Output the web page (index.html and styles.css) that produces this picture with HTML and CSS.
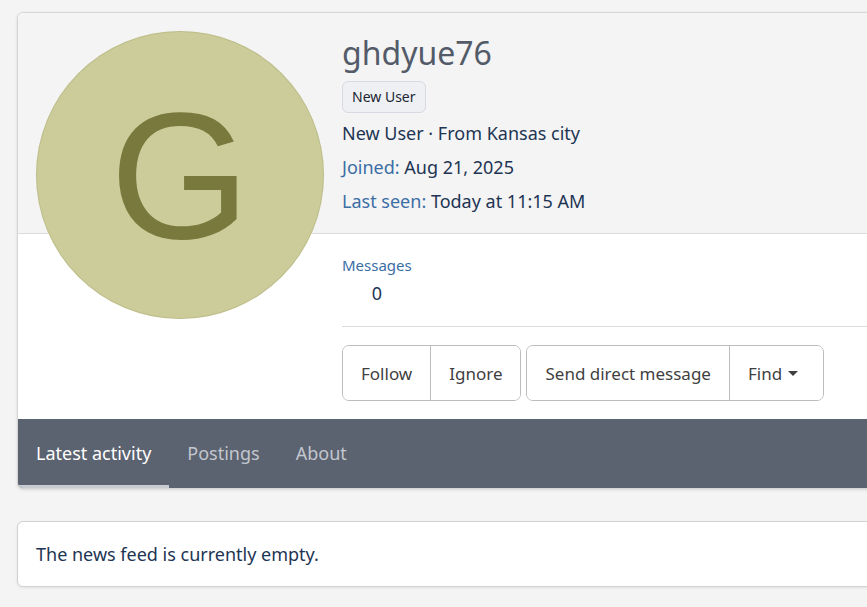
FILE: index.html
```html
<!DOCTYPE html>
<html lang="en">
<head>
<meta charset="utf-8">
<title>ghdyue76 | Profile</title>
<link rel="stylesheet" href="styles.css">
</head>
<body>
<div class="page">
  <section class="profile">
    <div class="profile-main">
      <div class="avatar-col">
        <div class="avatar"><span class="avatar-letter">G</span></div>
      </div>
      <div class="info-col">
        <div class="info-head">
          <h1 class="username">ghdyue76</h1>
          <div><span class="badge">New User</span></div>
          <div class="meta-lines">
            <div class="meta-line">New User · From Kansas city</div>
            <div class="meta-line"><span class="label">Joined:</span> Aug 21, 2025</div>
            <div class="meta-line"><span class="label">Last seen:</span> Today at 11:15 AM</div>
          </div>
        </div>
        <div class="info-body">
          <dl class="stat">
            <dt class="stat-label">Messages</dt>
            <dd class="stat-value">0</dd>
          </dl>
          <div class="actions">
            <div class="btn-group">
              <button class="btn">Follow</button>
              <button class="btn">Ignore</button>
            </div>
            <div class="btn-group">
              <button class="btn">Send direct message</button>
              <button class="btn btn-find">Find <span class="caret"></span></button>
            </div>
          </div>
        </div>
      </div>
    </div>
    <nav class="tabs">
      <a class="tab active">Latest activity</a>
      <a class="tab">Postings</a>
      <a class="tab">About</a>
    </nav>
  </section>
  <section class="feed">
    <p class="feed-empty">The news feed is currently empty.</p>
  </section>
</div>
</body>
</html>
```

FILE: styles.css
```css
* { box-sizing: border-box; }
html, body { margin: 0; padding: 0; }
body {
  background: #f4f4f4;
  font-family: "Noto Sans", "Open Sans", sans-serif;
  color: #1e3550;
  overflow: hidden;
  width: 867px;
  height: 607px;
}
.page {
  padding: 12px 0 0 17px;
  width: 960px;
}
.profile {
  width: 920px;
  border: 1px solid #d6d6d6;
  border-radius: 6px;
  overflow: hidden;
  background: #fff;
  box-shadow: 0 1px 3px rgba(0,0,0,0.12);
}
.profile-main {
  display: flex;
  gap: 18px;
  padding-left: 18px;
  background: linear-gradient(#f4f4f4 0, #f4f4f4 220px, #dcdcdc 220px, #dcdcdc 221px, #fff 221px);
}
.avatar-col { padding-top: 18px; }
.avatar {
  width: 288px;
  height: 288px;
  border-radius: 50%;
  background: #cbcc99;
  box-shadow: inset 0 0 0 1px rgba(120,120,60,0.18);
  display: flex;
  align-items: center;
  justify-content: center;
}
.avatar-letter {
  font-family: "Liberation Sans", Arial, sans-serif;
  font-size: 180px;
  line-height: 1;
  color: #79783d;
  margin-top: 2px;
}
.info-col { flex: 1; }
.info-head {
  height: 221px;
  padding-top: 20px;
  border-bottom: 1px solid #dcdcdc;
}
.username {
  margin: 0;
  font-size: 32px;
  line-height: 40px;
  font-weight: 400;
  color: #535b69;
}
.badge {
  display: inline-block;
  margin-top: 8px;
  height: 32px;
  line-height: 30px;
  padding: 0 9px;
  font-size: 14px;
  color: #1c2733;
  background: #eef0f3;
  border: 1px solid #d7dbe1;
  border-radius: 6px;
}
.meta-lines { margin-top: 3px; }
.meta-line {
  font-size: 18px;
  line-height: 34px;
  color: #1d3553;
}
.label { color: #3b6ea5; }
.info-body { padding: 20px 0 18px; }
.stat {
  margin: 0;
  display: inline-flex;
  flex-direction: column;
  align-items: center;
}
.stat-label {
  font-size: 15px;
  line-height: 22px;
  color: #3b6ea5;
}
.stat-value {
  margin: 0;
  font-size: 18px;
  line-height: 34px;
  color: #1d3553;
}
.actions {
  margin-top: 16px;
  border-top: 1px solid #dcdcdc;
  padding-top: 18px;
  display: flex;
  gap: 5px;
}
.btn-group {
  display: flex;
  border: 1px solid #bcbcbc;
  border-radius: 7px;
  overflow: hidden;
  background: #fff;
}
.btn {
  font: inherit;
  font-size: 17px;
  color: #3f3f3f;
  background: #fff;
  border: 0;
  height: 54px;
  padding: 0 18px;
  display: flex;
  align-items: center;
  gap: 6px;
}
.btn + .btn { border-left: 1px solid #bcbcbc; }
.btn-find { padding-right: 25px; }
.caret {
  width: 0;
  height: 0;
  border-left: 5px solid transparent;
  border-right: 5px solid transparent;
  border-top: 5px solid #3f3f3f;
}
.tabs {
  display: flex;
  background: #5b6270;
  height: 69px;
}
.tab {
  display: flex;
  align-items: center;
  padding: 0 18px;
  font-size: 18px;
  color: #c3c7ce;
  border-bottom: 3px solid transparent;
  padding-top: 2px;
}
.tab.active {
  color: #fff;
  border-bottom-color: #c8cbd1;
}
.feed {
  margin-top: 32px;
  width: 920px;
  background: #fff;
  border: 1px solid #d2d2d2;
  border-radius: 6px;
  box-shadow: 0 1px 3px rgba(0,0,0,0.08);
}
.feed-empty {
  margin: 0;
  padding: 0 18px;
  height: 64px;
  display: flex;
  align-items: center;
  font-size: 18px;
  color: #1d3553;
}
```
